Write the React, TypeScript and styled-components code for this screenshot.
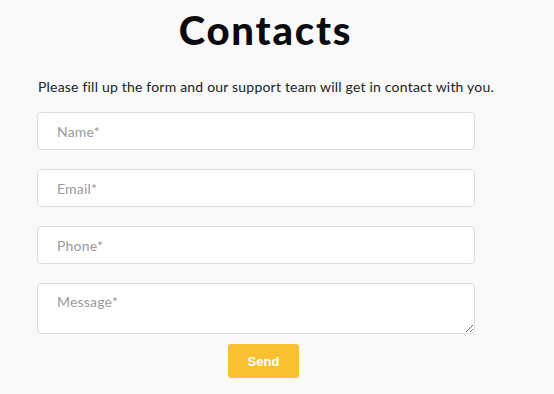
import React from "react";
import styled, { createGlobalStyle } from "styled-components";

const Global = createGlobalStyle`
  html, body { margin: 0; padding: 0; background: #f9f9f9; }
  body { font-family: "Lato", "Liberation Sans", sans-serif; }
`;

const Page = styled.div`
  display: flex;
  flex-direction: column;
  width: 457px;
  padding-left: 37px;
  padding-top: 6px;
`;

const Title = styled.h1`
  margin: 0;
  text-align: center;
  font-family: "Lato", sans-serif;
  font-weight: 900;
  font-size: 40px;
  line-height: 48px;
  color: #0b0b0f;
  letter-spacing: 1.8px;
`;

const Intro = styled.p`
  margin: 24px 0 0 1px;
  font-family: "Lato", sans-serif;
  font-size: 14px;
  line-height: 17px;
  color: #222;
  white-space: nowrap;
  letter-spacing: 0.2px;
`;

const Form = styled.form`
  display: flex;
  flex-direction: column;
  gap: 19px;
  margin-top: 17px;
`;

const fieldBase = `
  box-sizing: border-box;
  width: 438px;
  border: 1px solid #dcdcdc;
  border-radius: 4px;
  background: #fff;
  font-family: "Lato", sans-serif;
  font-size: 14px;
  color: #333;
  padding: 0 19px;
  outline: none;
  letter-spacing: 0.2px;
  &::placeholder { color: #9a9a9a; }
`;

const Input = styled.input`
  ${fieldBase}
  height: 38px;
`;

const TextArea = styled.textarea`
  ${fieldBase}
  height: 51px;
  padding-top: 9px;
  resize: vertical;
  display: block;
`;

const SendButton = styled.button`
  align-self: center;
  margin-top: -9px;
  margin-left: -4px;
  width: 71px;
  height: 34px;
  border: none;
  border-radius: 3px;
  background: #f9c132;
  color: #fff;
  font-family: "Liberation Sans", Arial, sans-serif;
  font-weight: 700;
  font-size: 13px;
  cursor: pointer;
`;

export default function App() {
  return (
    <>
      <Global />
      <Page>
        <Title>Contacts</Title>
        <Intro>Please fill up the form and our support team will get in contact with you.</Intro>
        <Form onSubmit={(e) => e.preventDefault()}>
          <Input placeholder="Name*" />
          <Input placeholder="Email*" />
          <Input placeholder="Phone*" />
          <TextArea placeholder="Message*" />
          <SendButton type="submit">Send</SendButton>
        </Form>
      </Page>
    </>
  );
}
